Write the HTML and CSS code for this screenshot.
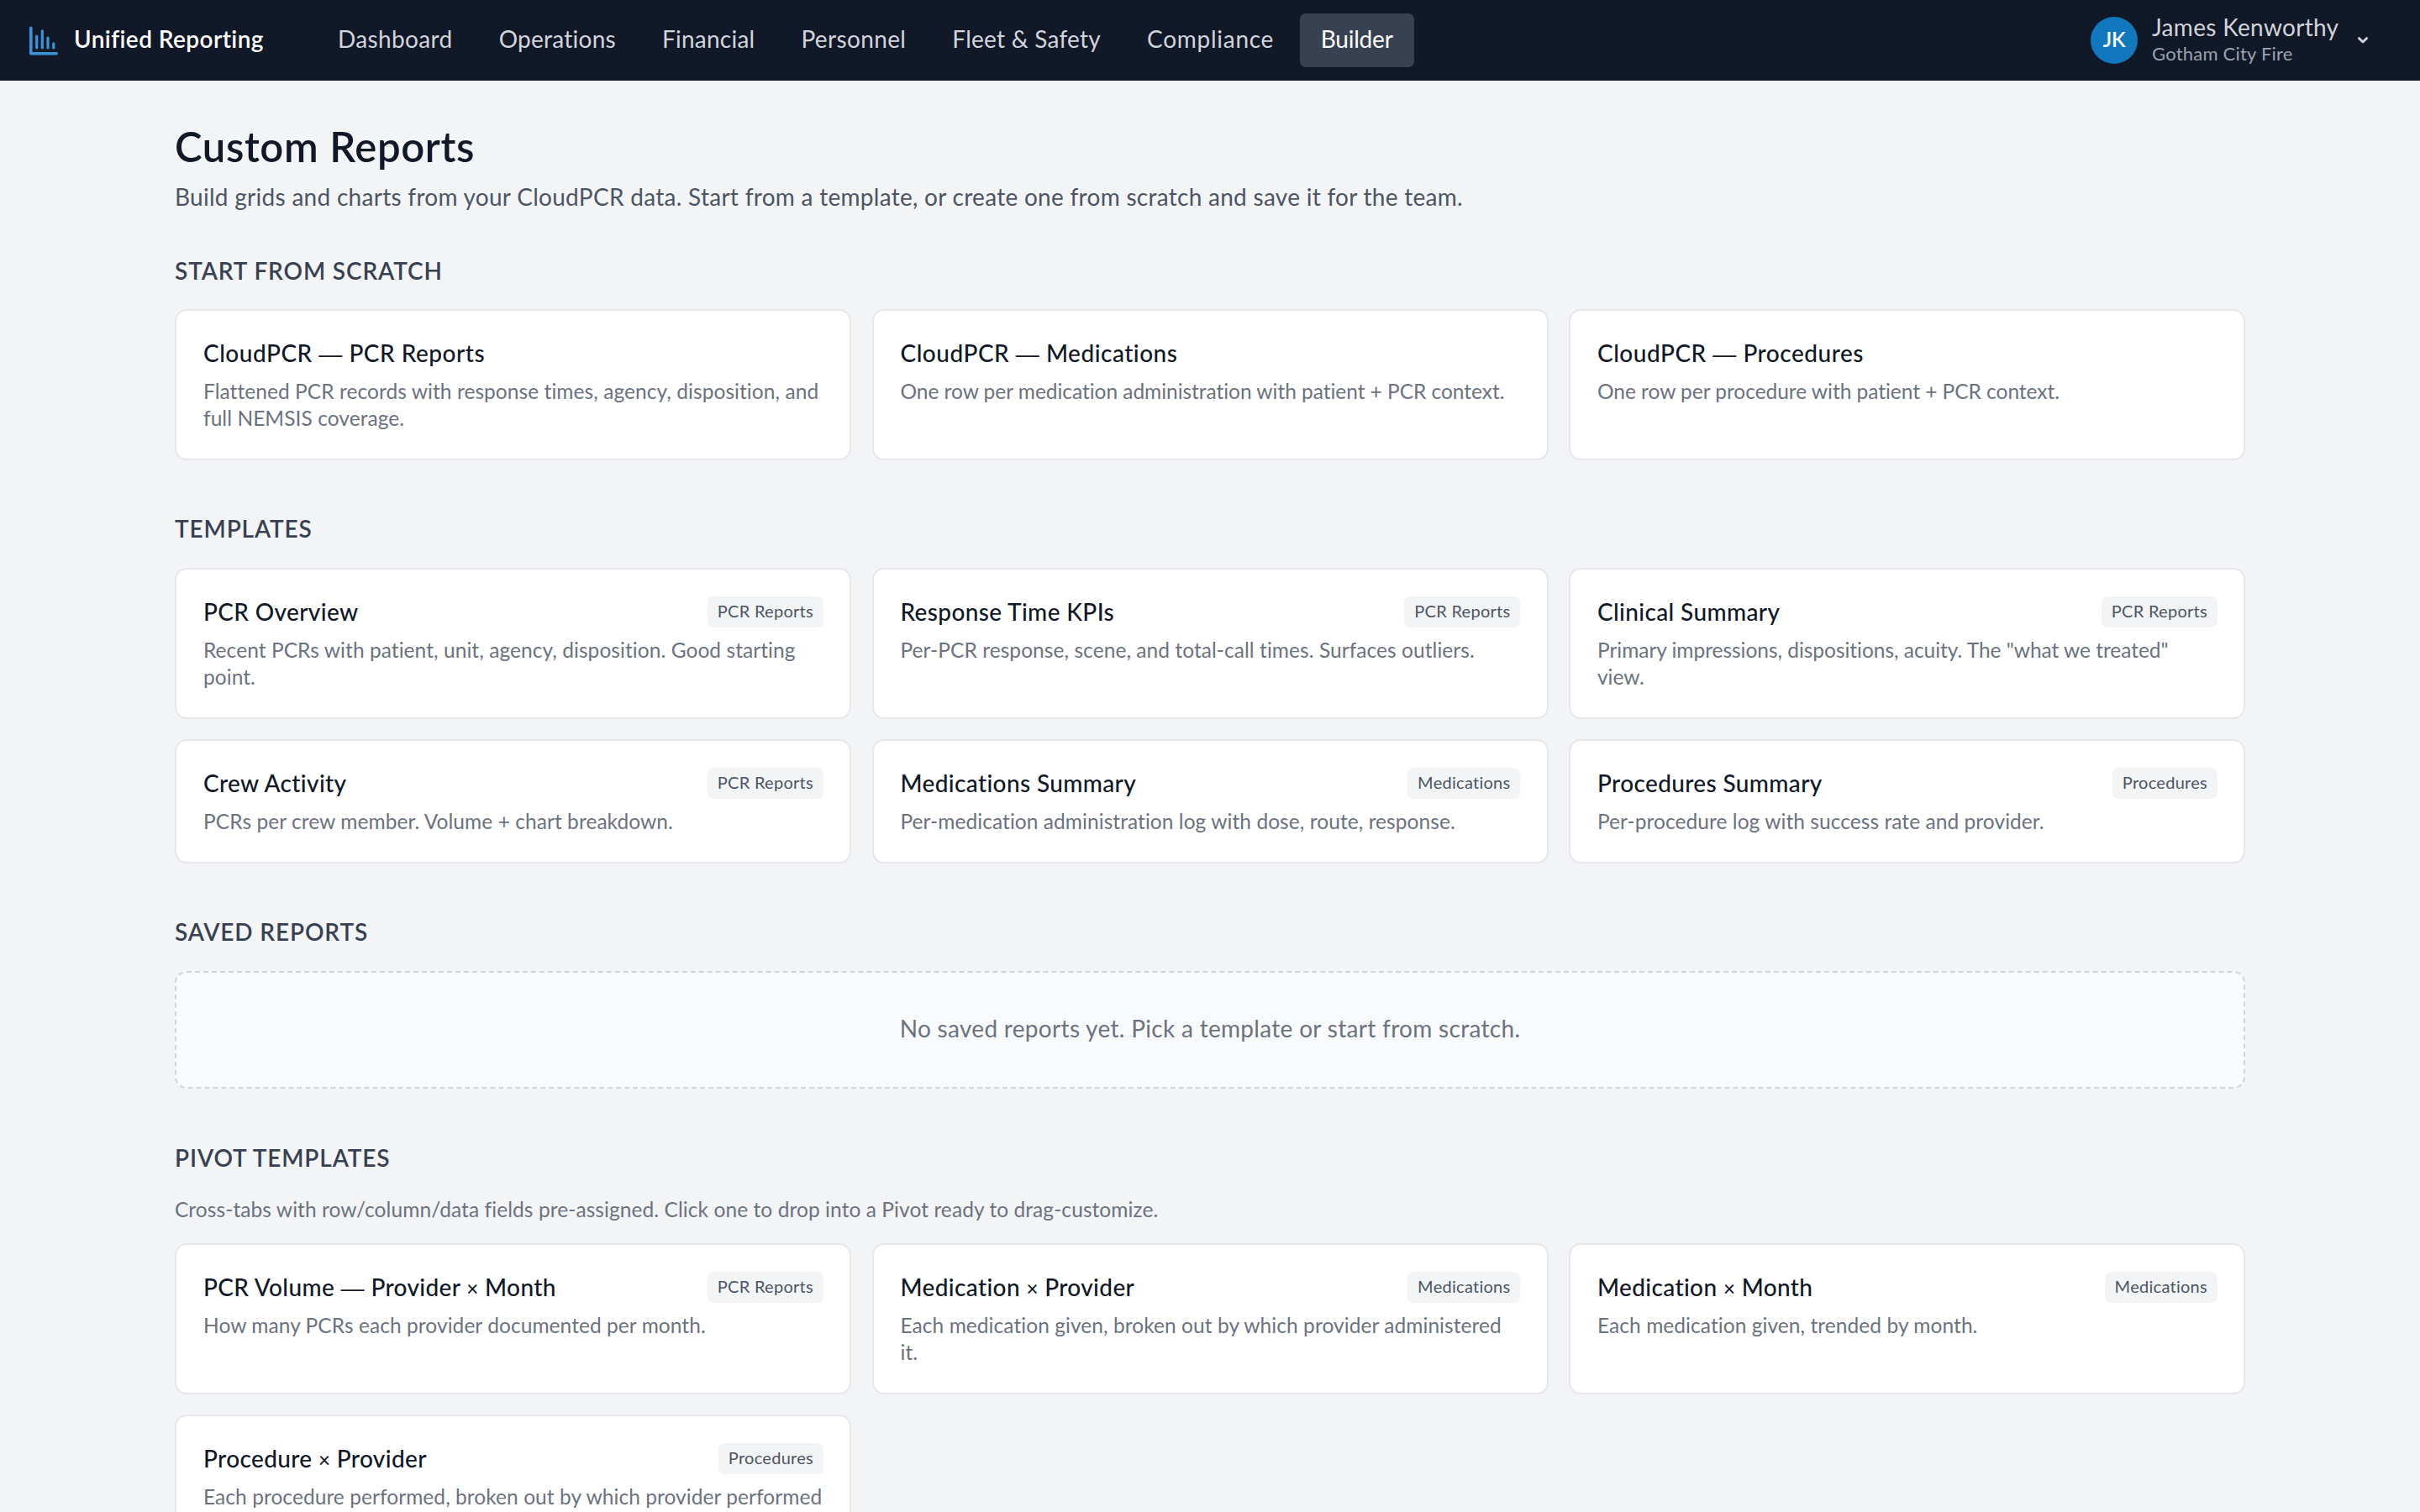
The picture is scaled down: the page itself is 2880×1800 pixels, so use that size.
FILE: index.html
```html
<!DOCTYPE html>
<html lang="en">
<head>
<meta charset="utf-8">
<title>Custom Reports — Unified Reporting</title>
<link rel="stylesheet" href="styles.css">
</head>
<body>
<header class="topbar">
  <div class="brand">
    <svg class="brand-icon" viewBox="0 0 35 35" fill="none" stroke="currentColor" stroke-linecap="round" stroke-linejoin="round">
      <path class="axis" d="M1.8 2.3V32.7H32.2"/>
      <path class="bars" d="M8.7 12.1V25.9M15.3 5.8V25.9M22 14.1V25.9M28.7 20.8V25.9"/>
    </svg>
    <span class="brand-name">Unified Reporting</span>
  </div>
  <nav class="nav">
    <a class="nav-link wide">Dashboard</a>
    <a class="nav-link">Operations</a>
    <a class="nav-link">Financial</a>
    <a class="nav-link wide">Personnel</a>
    <a class="nav-link">Fleet &amp; Safety</a>
    <a class="nav-link wider">Compliance</a>
    <a class="nav-link active">Builder</a>
  </nav>
  <div class="user">
    <div class="avatar">JK</div>
    <div class="user-text">
      <span class="user-name">James Kenworthy</span>
      <span class="user-org">Gotham City Fire</span>
    </div>
    <svg class="chevron" viewBox="0 0 14 10" fill="none" stroke="currentColor" stroke-width="2.8" stroke-linecap="round" stroke-linejoin="round"><path d="M2.4 2.4L7 7L11.6 2.4"/></svg>
  </div>
</header>

<main class="page">
  <h1 class="page-title">Custom Reports</h1>
  <p class="page-subtitle">Build grids and charts from your CloudPCR data. Start from a template, or create one from scratch and save it for the team.</p>

  <section class="section">
    <h2 class="section-title">Start from scratch</h2>
    <div class="grid">
      <article class="card"><div class="card-head"><h3 class="card-title source">CloudPCR <span class="dash">—</span> PCR Reports</h3></div><p class="card-desc">Flattened PCR records with response times, agency, disposition, and full NEMSIS coverage.</p></article>
      <article class="card"><div class="card-head"><h3 class="card-title source">CloudPCR <span class="dash">—</span> Medications</h3></div><p class="card-desc snug">One row per medication administration with patient + PCR context.</p></article>
      <article class="card"><div class="card-head"><h3 class="card-title source">CloudPCR <span class="dash">—</span> Procedures</h3></div><p class="card-desc snug">One row per procedure with patient + PCR context.</p></article>
    </div>
  </section>

  <section class="section">
    <h2 class="section-title">Templates</h2>
    <div class="grid">
      <article class="card"><div class="card-head"><h3 class="card-title">PCR Overview</h3><span class="badge">PCR Reports</span></div><p class="card-desc">Recent PCRs with patient, unit, agency, disposition. Good starting point.</p></article>
      <article class="card"><div class="card-head"><h3 class="card-title">Response Time KPIs</h3><span class="badge">PCR Reports</span></div><p class="card-desc">Per-PCR response, scene, and total-call times. Surfaces outliers.</p></article>
      <article class="card"><div class="card-head"><h3 class="card-title">Clinical Summary</h3><span class="badge">PCR Reports</span></div><p class="card-desc snug">Primary impressions, dispositions, acuity. The "what we treated" view.</p></article>
      <article class="card"><div class="card-head"><h3 class="card-title">Crew Activity</h3><span class="badge">PCR Reports</span></div><p class="card-desc">PCRs per crew member. Volume + chart breakdown.</p></article>
      <article class="card"><div class="card-head"><h3 class="card-title">Medications Summary</h3><span class="badge">Medications</span></div><p class="card-desc">Per-medication administration log with dose, route, response.</p></article>
      <article class="card"><div class="card-head"><h3 class="card-title">Procedures Summary</h3><span class="badge">Procedures</span></div><p class="card-desc">Per-procedure log with success rate and provider.</p></article>
    </div>
  </section>

  <section class="section">
    <h2 class="section-title">Saved reports</h2>
    <div class="empty">No saved reports yet. Pick a template or start from scratch.</div>
  </section>

  <section class="section">
    <h2 class="section-title">Pivot templates</h2>
    <p class="section-note">Cross-tabs with row/column/data fields pre-assigned. Click one to drop into a Pivot ready to drag-customize.</p>
    <div class="grid">
      <article class="card"><div class="card-head"><h3 class="card-title">PCR Volume <span class="dash">—</span> Provider <span class="times">×</span> Month</h3><span class="badge">PCR Reports</span></div><p class="card-desc">How many PCRs each provider documented per month.</p></article>
      <article class="card"><div class="card-head"><h3 class="card-title">Medication <span class="times">×</span> Provider</h3><span class="badge">Medications</span></div><p class="card-desc">Each medication given, broken out by which provider administered it.</p></article>
      <article class="card"><div class="card-head"><h3 class="card-title">Medication <span class="times">×</span> Month</h3><span class="badge">Medications</span></div><p class="card-desc">Each medication given, trended by month.</p></article>
      <article class="card"><div class="card-head"><h3 class="card-title">Procedure <span class="times">×</span> Provider</h3><span class="badge">Procedures</span></div><p class="card-desc">Each procedure performed, broken out by which provider performed it.</p></article>
    </div>
  </section>
</main>
</body>
</html>
```
FILE: styles.css
```css
*,
*::before,
*::after {
  box-sizing: border-box;
}

body {
  margin: 0;
  height: 1800px;
  overflow: hidden;
  background: #f3f4f6;
  color: #111827;
  font-family: Lato, "Liberation Sans", sans-serif;
  font-size: 28px;
  font-variant-ligatures: none;
}

h1, h2, h3, p {
  margin: 0;
}

.topbar {
  display: flex;
  align-items: center;
  height: 96px;
  padding: 0 61px 0 35px;
  background: #111827;
  color: #d1d5db;
}

.brand {
  display: flex;
  align-items: center;
  gap: 18px;
  width: 342.5px;
}

.brand-icon {
  flex: none;
  width: 35px;
  height: 35px;
  color: #3b93d9;
}

.axis { stroke-width: 3.6; }
.bars { stroke-width: 3.2; }

.brand-name {
  padding-bottom: 4px;
  color: #fff;
  font-weight: 600;
  letter-spacing: 0.015em;
  white-space: nowrap;
}

.nav {
  display: flex;
  gap: 6px;
}

.nav-link {
  padding: 0 24.5px 4px;
  border-radius: 7px;
  line-height: 60px;
  letter-spacing: 0.009em;
  white-space: nowrap;
}

.nav-link.wide { letter-spacing: 0.013em; }
.nav-link.wider { letter-spacing: 0.026em; }

.nav-link.active {
  padding-right: 25.5px;
  padding-left: 25px;
  background: #374151;
  color: #fff;
  letter-spacing: -0.007em;
}

.user {
  display: flex;
  align-items: center;
  margin-left: auto;
}

.avatar {
  display: flex;
  align-items: center;
  justify-content: center;
  width: 56px;
  height: 56px;
  margin-right: 17px;
  padding-bottom: 2px;
  border-radius: 50%;
  background: #1278be;
  color: #fff;
  font-size: 24.5px;
  font-weight: 600;
  letter-spacing: -0.01em;
}

.user-text {
  display: flex;
  flex-direction: column;
  width: 244px;
  padding-bottom: 3.4px;
}

.user-name {
  line-height: 35px;
  letter-spacing: 0.011em;
  white-space: nowrap;
}

.user-org {
  color: #9ca3af;
  font-size: 22px;
  line-height: 28px;
  letter-spacing: 0.01em;
}

.chevron {
  width: 14px;
  height: 10px;
}

.page {
  width: 2464px;
  margin: 0 auto;
  padding-top: 48px;
}

.page-title {
  font-size: 49px;
  font-weight: 600;
  line-height: 60px;
  letter-spacing: 0.013em;
}

.page-subtitle {
  margin-top: 12px;
  color: #4b5563;
  line-height: 37px;
  letter-spacing: 0.01em;
}

.section {
  padding-top: 50.7px;
}

.section + .section {
  padding-top: 63.7px;
}

.section-title {
  margin-bottom: 27.6px;
  color: #374151;
  font-size: 28px;
  font-weight: 600;
  line-height: 37px;
  letter-spacing: 0.031em;
  text-transform: uppercase;
}

.section-note {
  margin: 0 0 25px;
  padding-top: 0;
  color: #6b7280;
  font-size: 24.5px;
  line-height: 31px;
  letter-spacing: 0.0032em;
}

.grid {
  display: grid;
  grid-template-columns: repeat(3, 1fr);
  gap: 24.5px;
}

.card {
  padding: 31.5px 31.5px 32px 32px;
  border: 2px solid #e5e7eb;
  border-radius: 14px;
  background: #fff;
}

.card-head {
  display: flex;
  align-items: flex-start;
  justify-content: space-between;
  height: 37.5px;
  margin-bottom: 10.5px;
}

.card-title {
  font-size: 28px;
  font-weight: 500;
  line-height: 37px;
  letter-spacing: 0.013em;
}

.card-title.source { letter-spacing: 0.018em; }

.dash { font-family: "Liberation Sans", sans-serif; }
.times { font-size: 0.86em; }

.badge {
  height: 37.5px;
  padding: 0 11.5px 0 12px;
  border-radius: 7px;
  background: #f3f4f6;
  color: #4b5563;
  font-size: 20px;
  line-height: 34px;
  letter-spacing: 0.014em;
}

.card-desc {
  color: #6b7280;
  font-size: 24.5px;
  line-height: 32px;
  letter-spacing: 0.0025em;
}

.card-desc.snug { letter-spacing: -0.0015em; }

.empty {
  height: 140px;
  border: 2px dashed #d1d5db;
  border-radius: 14px;
  background: #f9fafb;
  color: #6b7280;
  line-height: 132px;
  letter-spacing: 0.011em;
  text-align: center;
}
```
